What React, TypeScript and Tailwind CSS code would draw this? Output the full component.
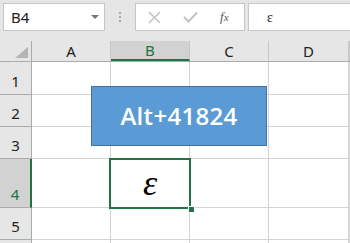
const COLS = ['A', 'B', 'C', 'D', ''];
const ROWS = [
  { n: '1', h: 'h-[33px]' },
  { n: '2', h: 'h-[32px]' },
  { n: '3', h: 'h-[32px]' },
  { n: '4', h: 'h-[49px]' },
  { n: '5', h: 'h-[32px]' },
  { n: '', h: 'h-[32px]' },
];
const widths = ['w-[79px]', 'w-[79px]', 'w-[79px]', 'w-[80px]', 'flex-1'];

export default function App() {
  return (
    <div className="relative w-[350px] h-[243px] overflow-hidden bg-white" style={{ fontFamily: '"Noto Sans", "Open Sans", sans-serif' }}>
      {/* Formula bar */}
      <div className="h-[41px] bg-[#e6e6e6] flex items-start pt-[3px] pl-[3px]">
        <div className="w-[102px] h-[28px] bg-white border border-[#c6c6c6] flex items-center justify-between pl-[7px] pr-[5px]">
          <span className="text-[15px] text-[#222]">B4</span>
          <span className="w-0 h-0 border-l-[4px] border-r-[4px] border-t-[4px] border-l-transparent border-r-transparent border-t-[#777]" />
        </div>
        <div className="w-[30px] h-[28px] flex flex-col items-center justify-center gap-[2px]">
          <span className="w-[2px] h-[2px] bg-[#aaa]" />
          <span className="w-[2px] h-[2px] bg-[#aaa]" />
          <span className="w-[2px] h-[2px] bg-[#aaa]" />
        </div>
        <div className="w-[110px] h-[28px] bg-white border border-[#c6c6c6] flex items-center">
          <svg width="13" height="13" viewBox="0 0 13 13" className="ml-[12px]">
            <path d="M1 1 L12 12 M12 1 L1 12" stroke="#c3c3c3" strokeWidth="1.6" />
          </svg>
          <svg width="15" height="12" viewBox="0 0 15 12" className="ml-[22px]">
            <path d="M1 6 L5.5 10.5 L14 1.5" stroke="#c3c3c3" strokeWidth="2" fill="none" />
          </svg>
          <span className="ml-[22px] text-[13px] italic text-[#555]" style={{ fontFamily: '"Liberation Serif", serif' }}>
            f<span className="text-[11px]">x</span>
          </span>
        </div>
        <div className="ml-[3px] flex-1 h-[28px] bg-white border border-[#c6c6c6] border-r-0 flex items-center pl-[18px]">
          <span className="text-[14px] text-[#222]" style={{ fontFamily: '"Liberation Serif", serif' }}>ε</span>
        </div>
      </div>

      {/* Column headers */}
      <div className="flex h-[21px] bg-[#e6e6e6] border-b border-[#ababab]">
        <div className="w-[32px] shrink-0 border-r border-[#ababab] flex items-end justify-end pr-[3px] pb-[3px]">
          <svg width="13" height="11" viewBox="0 0 13 11">
            <path d="M13 0 L13 11 L0 11 Z" fill="#b4b4b4" />
          </svg>
        </div>
        {COLS.map((c, i) => (
          <div
            key={i}
            className={`${widths[i]} shrink-0 flex items-center justify-center text-[15px] border-r border-[#c8c8c8] ${c === 'B' ? 'bg-[#d2d2d2] border-b-2 border-b-[#217346] text-[#217346]' : 'text-[#222]'}`}
          >
            {c}
          </div>
        ))}
      </div>

      {/* Rows */}
      {ROWS.map((r, ri) => (
        <div key={ri} className={`flex ${r.h}`}>
          <div
            className={`w-[32px] shrink-0 flex items-end justify-center pb-[2px] text-[15px] border-b border-[#ababab] ${r.n === '4' ? 'bg-[#d2d2d2] border-r-2 border-r-[#217346] text-[#217346]' : 'bg-[#e6e6e6] border-r border-[#ababab] text-[#222]'}`}
          >
            {r.n}
          </div>
          {COLS.map((c, i) => (
            <div key={i} className={`${widths[i]} shrink-0 border-r border-b border-[#d4d4d4] flex items-center justify-center`}>
              {r.n === '4' && c === 'B' && (
                <span className="text-[36px] leading-none italic text-black" style={{ fontFamily: '"Liberation Serif", serif' }}>ε</span>
              )}
            </div>
          ))}
        </div>
      ))}

      {/* Selected cell B4 */}
      <div className="absolute left-[109px] top-[158px] w-[82px] h-[51px] border-2 border-[#217346]" />
      <div className="absolute left-[188px] top-[206px] w-[5px] h-[5px] bg-[#217346] border border-white box-content" />

      {/* Shape */}
      <div className="absolute left-[91px] top-[86px] w-[176px] h-[60px] bg-[#5b9bd5] border border-[#41719c] flex items-center justify-center">
        <span className="text-white text-[24px] font-semibold tracking-[0.3px]" style={{ fontFamily: '"Open Sans", sans-serif' }}>Alt+41824</span>
      </div>
    </div>
  );
}
